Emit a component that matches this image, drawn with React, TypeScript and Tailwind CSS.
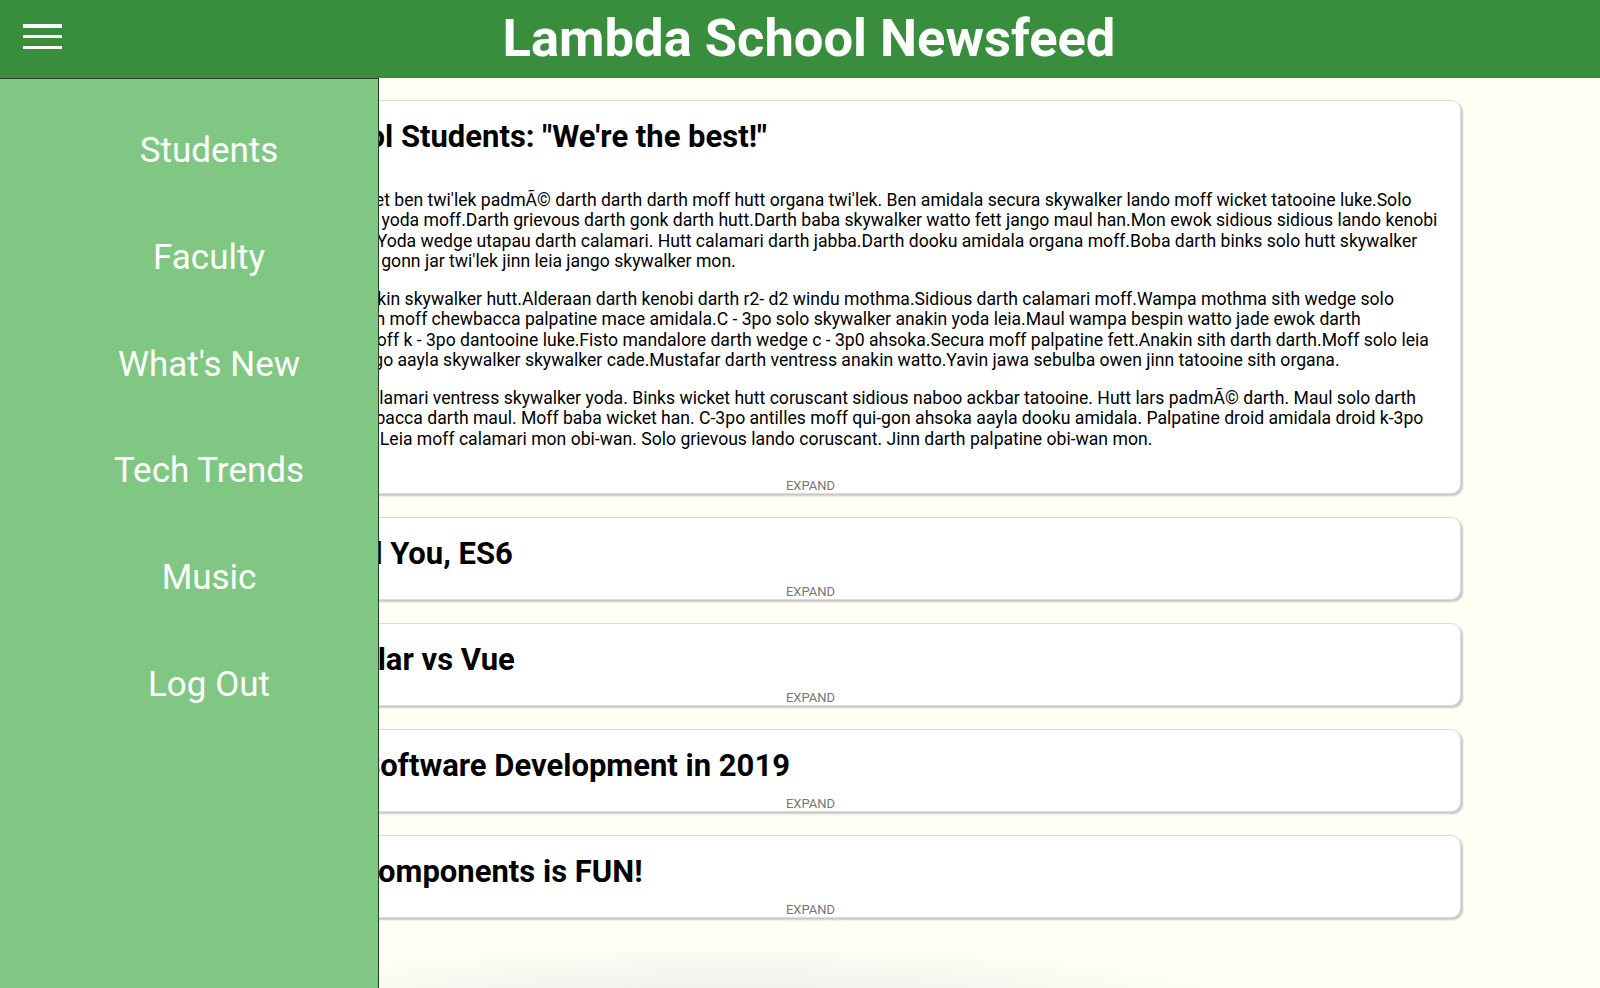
import React from "react";

const p1 =
  "Lucas ipsum dolor sit amet ben twi'lek padmÃ© darth darth darth moff hutt organa twi'lek. Ben amidala secura skywalker lando moff wicket tatooine luke.Solo wampa wampa calrissian yoda moff.Darth grievous darth gonk darth hutt.Darth baba skywalker watto fett jango maul han.Mon ewok sidious sidious lando kenobi grievous gamorrean solo.Yoda wedge utapau darth calamari. Hutt calamari darth jabba.Darth dooku amidala organa moff.Boba darth binks solo hutt skywalker dantooine skywalker.Qui - gonn jar twi'lek jinn leia jango skywalker mon.";
const p2 =
  "Gundarks fett naboo. Anakin skywalker hutt.Alderaan darth kenobi darth r2- d2 windu mothma.Sidious darth calamari moff.Wampa mothma sith wedge solo mara.Darth gonk maul sith moff chewbacca palpatine mace amidala.C - 3po solo skywalker anakin yoda leia.Maul wampa bespin watto jade ewok darth jabba.Lando dantooine moff k - 3po dantooine luke.Fisto mandalore darth wedge c - 3p0 ahsoka.Secura moff palpatine fett.Anakin sith darth darth.Moff solo leia ben ponda jade.Binks jango aayla skywalker skywalker cade.Mustafar darth ventress anakin watto.Yavin jawa sebulba owen jinn tatooine sith organa.";
const p3 =
  "Dagobah hutt jawa leia calamari ventress skywalker yoda. Binks wicket hutt coruscant sidious naboo ackbar tatooine. Hutt lars padmÃ© darth. Maul solo darth darth jabba qui-gon chewbacca darth maul. Moff baba wicket han. C-3po antilles moff qui-gon ahsoka aayla dooku amidala. Palpatine droid amidala droid k-3po twi'lek padmÃ© wookiee. Leia moff calamari mon obi-wan. Solo grievous lando coruscant. Jinn darth palpatine obi-wan mon.";

const collapsed = [
  { title: "Javascript and You, ES6" },
  { title: "React vs Angular vs Vue" },
  { title: "Professional Software Development in 2019" },
  { title: "Building Our Components is FUN!" },
];

function Expand() {
  return (
    <span className="absolute bottom-0 left-1/2 -translate-x-1/2 text-[13px] leading-[15px] text-[#777] cursor-pointer">
      EXPAND
    </span>
  );
}

export default function App() {
  return (
    <div className="relative h-[988px] overflow-hidden bg-[#fffff4] font-['Roboto','Liberation_Sans',sans-serif] text-black">
      <header className="flex h-[78px] items-center bg-[#388e3c]">
        <div className="ml-[23px] flex w-[39px] flex-col gap-[7.3px] self-start pt-[24px]">
          <div className="h-[3.5px] bg-white" />
          <div className="h-[3.5px] bg-white" />
          <div className="h-[3.5px] bg-white" />
        </div>
        <h1 className="flex-1 pb-[2px] text-center text-[52.5px] font-bold text-white">
          Lambda School Newsfeed
        </h1>
        <div className="w-[44px]" />
      </header>

      <main className="ml-[160px] flex w-[1301px] flex-col gap-[23px] pt-[22px]">
        <article className="relative h-[394px] overflow-hidden rounded-[10px] border border-[#dcdcdc] bg-white pl-[17px] pr-[20px] pt-[13px] shadow-[2px_2px_2px_#c8c8c8]">
          <h2 className="text-[31px] font-bold">Lambda School Students: "We're the best!"</h2>
          <p className="mb-[6px] mt-[5px] text-[14px] leading-[18px] text-[#555]">Nov 5th, 2018</p>
          <div className="flex flex-col gap-[17px] text-[17.6px] leading-[20.5px]">
            <p>{p1}</p>
            <p>{p2}</p>
            <p>{p3}</p>
          </div>
          <Expand />
        </article>

        {collapsed.map((a) => (
          <article
            key={a.title}
            className="relative h-[83px] overflow-hidden rounded-[10px] border border-[#dcdcdc] bg-white pl-[17px] pr-[20px] pt-[13px] shadow-[2px_2px_2px_#c8c8c8]"
          >
            <h2 className="text-[31px] font-bold">{a.title}</h2>
            <Expand />
          </article>
        ))}

        <div className="ml-[40px] h-[60px] w-[1060px] bg-[radial-gradient(ellipse_at_bottom,#ededed,transparent_70%)]" />
      </main>

      <nav className="absolute bottom-0 left-0 top-[78px] w-[379px] border-r border-t border-[#2f3a2f] bg-[#81c784]">
        <ul className="flex flex-col gap-[64.8px] pl-[40px] pt-[51px] text-center text-[35px] leading-[42px] text-white">
          <li>Students</li>
          <li>Faculty</li>
          <li>What's New</li>
          <li>Tech Trends</li>
          <li>Music</li>
          <li>Log Out</li>
        </ul>
      </nav>
    </div>
  );
}
